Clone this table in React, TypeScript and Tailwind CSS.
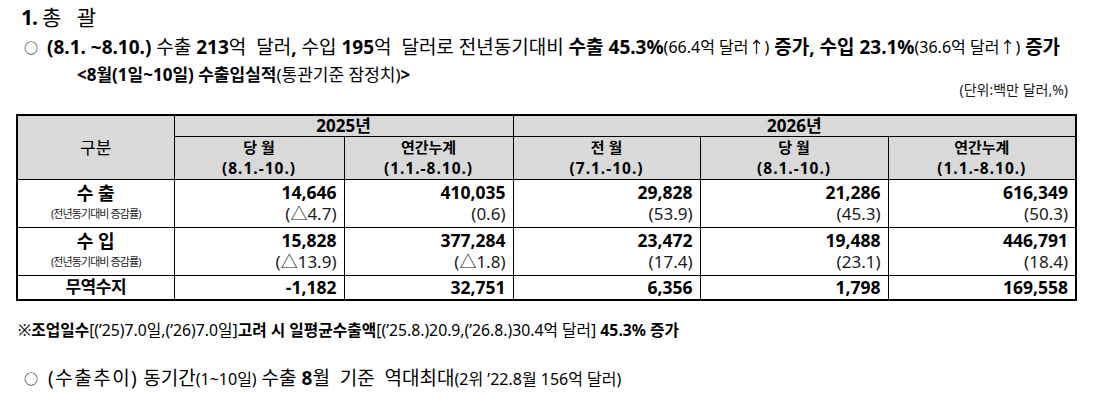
import React from "react";

const F = { fontFamily: '"Noto Sans", "Noto Sans CJK KR", sans-serif' };

function Cell({ top, bottom }: { top: string; bottom: string }) {
  return (
    <td className="border border-black pr-[7px] pt-[1px] align-top text-right">
      <div className="text-[17.5px] leading-[22px] font-bold">{top}</div>
      <div className="text-[17px] leading-[22px] text-[#1a1a1a]">{bottom}</div>
    </td>
  );
}

function Label({ main, sub }: { main: string; sub: string }) {
  return (
    <td className="border border-black align-middle">
      <div className="flex flex-col items-center pb-[4px]">
        <div className="text-[18px] font-bold leading-[25px]">{main}</div>
        <div className="text-[11px] leading-[16px] tracking-[-0.9px] text-[#1a1a1a]">{sub}</div>
      </div>
    </td>
  );
}

const heads: [string, string][] = [
  ["당 월", "(8.1.-10.)"],
  ["연간누계", "(1.1.-8.10.)"],
  ["전 월", "(7.1.-10.)"],
  ["당 월", "(8.1.-10.)"],
  ["연간누계", "(1.1.-8.10.)"],
];

export default function App() {
  return (
    <div className="w-[1103px] h-[400px] bg-white text-black overflow-hidden" style={F}>
      <div className="h-[36px] flex items-center pl-[21px] text-[21px] whitespace-nowrap">
        <span className="font-bold tracking-[-1px]">1.</span>
        <span className="ml-[5px] tracking-[5px]">총 괄</span>
      </div>
      <div className="h-[22px] flex items-center pl-[24px] text-[19px] whitespace-nowrap">
        <span className="text-[14px] mr-[9px]">○</span>
        <span className="font-bold">(8.1. ~8.10.)</span>
        <span>&nbsp;수출&nbsp;</span>
        <span className="font-bold">213</span>
        <span>억&nbsp; 달러</span>
        <span className="font-bold">,</span>
        <span>&nbsp;수입&nbsp;</span>
        <span className="font-bold">195</span>
        <span>억&nbsp; 달러로 전년동기대비&nbsp;</span>
        <span className="font-bold">수출&nbsp;45.3%</span>
        <span className="text-[16px]">(66.4억 달러↑)</span>
        <span className="font-bold">&nbsp;증가, 수입&nbsp;23.1%</span>
        <span className="text-[16px]">(36.6억 달러↑)</span>
        <span className="font-bold">&nbsp;증가</span>
      </div>
      <div className="mt-[5px] h-[24px] flex items-center pl-[77px] text-[17px] whitespace-nowrap">
        <span className="font-bold">&lt;8월(1일~10일) 수출입실적</span>
        <span>(통관기준 잠정치)</span>
        <span className="font-bold">&gt;</span>
      </div>
      <div className="-mt-[5px] h-[14px] flex items-center justify-end pr-[35px] text-[14px] text-[#1a1a1a] whitespace-nowrap">
        (단위:백만 달러,%)
      </div>
      <div className="pl-[16px] mt-[18px]">
        <table className="border-collapse border-2 border-black table-fixed w-[1059px]">
          <colgroup>
            <col className="w-[157px]" />
            <col className="w-[170px]" />
            <col className="w-[169px]" />
            <col className="w-[187px]" />
            <col className="w-[188px]" />
            <col className="w-[188px]" />
          </colgroup>
          <tbody>
            <tr className="h-[21px] bg-[#d9d9d9]">
              <td rowSpan={2} className="border border-black text-center align-middle text-[17px] leading-[20px]">구분</td>
              <td colSpan={2} className="border border-black text-center font-bold text-[17px] leading-[20px]">2025년</td>
              <td colSpan={3} className="border border-black text-center font-bold text-[17px] leading-[20px]">2026년</td>
            </tr>
            <tr className="h-[42px] bg-[#d9d9d9]">
              {heads.map(([a, b], i) => (
                <td key={i} className="border border-black text-center font-bold align-middle">
                  <div className="text-[15px] leading-[21px]">{a}</div>
                  <div className="text-[15.5px] leading-[21px] tracking-[1px]">{b}</div>
                </td>
              ))}
            </tr>
            <tr className="h-[48px]">
              <Label main="수 출" sub="(전년동기대비 증감률)" />
              <Cell top="14,646" bottom="(△4.7)" />
              <Cell top="410,035" bottom="(0.6)" />
              <Cell top="29,828" bottom="(53.9)" />
              <Cell top="21,286" bottom="(45.3)" />
              <Cell top="616,349" bottom="(50.3)" />
            </tr>
            <tr className="h-[48px]">
              <Label main="수 입" sub="(전년동기대비 증감률)" />
              <Cell top="15,828" bottom="(△13.9)" />
              <Cell top="377,284" bottom="(△1.8)" />
              <Cell top="23,472" bottom="(17.4)" />
              <Cell top="19,488" bottom="(23.1)" />
              <Cell top="446,791" bottom="(18.4)" />
            </tr>
            <tr className="h-[24px]">
              <td className="border border-black text-center text-[17px] font-bold leading-[20px] tracking-[-0.5px]">무역수지</td>
              {["-1,182", "32,751", "6,356", "1,798", "169,558"].map((v, i) => (
                <td key={i} className="border border-black text-right pr-[7px] text-[17.5px] font-bold leading-[20px]">{v}</td>
              ))}
            </tr>
          </tbody>
        </table>
      </div>
      <div className="mt-[19px] h-[22px] flex items-center pl-[18px] text-[15.75px] whitespace-nowrap">
        <span>※</span>
        <span className="font-bold">조업일수</span>
        <span>[(’25)7.0일,(’26)7.0일]</span>
        <span className="font-bold">고려 시 일평균수출액</span>
        <span>[(’25.8.)20.9,(’26.8.)30.4억 달러]</span>
        <span className="font-bold">&nbsp;45.3% 증가</span>
      </div>
      <div className="mt-[25px] h-[24px] flex items-center pl-[24px] text-[19px] whitespace-nowrap">
        <span className="text-[14px] mr-[10px]">○</span>
        <span className="tracking-[1.5px]">(수출추이)</span>
        <span>&nbsp;동기간</span>
        <span className="text-[16px]">(1~10일)</span>
        <span>&nbsp;수출&nbsp;</span>
        <span className="font-bold">8</span>
        <span>월&nbsp; 기준&nbsp; 역대최대</span>
        <span className="text-[16px]">(2위 ’22.8월 156억 달러)</span>
      </div>
    </div>
  );
}
